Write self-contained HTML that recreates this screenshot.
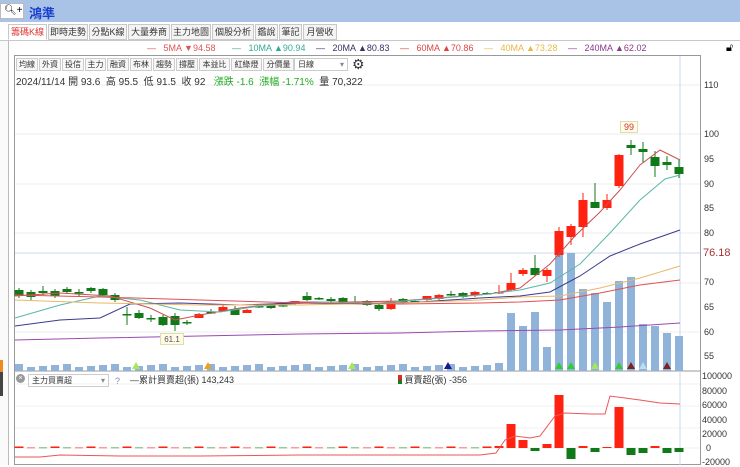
<!DOCTYPE html>
<html><head><meta charset="utf-8"><style>
*{margin:0;padding:0;box-sizing:border-box}
body{width:740px;height:465px;overflow:hidden;background:#fff;font-family:"Liberation Sans","Noto Sans CJK TC",sans-serif;position:relative}
.a{position:absolute}
.tab{position:absolute;top:24px;height:16px;border:1px solid #c8c8c8;background:#f4f4f4;font-size:9px;line-height:14px;color:#333;text-align:center;white-space:nowrap;overflow:hidden}
.btn{position:absolute;top:58px;height:13px;border:1px solid #ccc;background:#f7f7f7;font-size:8px;line-height:11px;color:#333;text-align:center;white-space:nowrap;overflow:hidden}
.ma{position:absolute;top:43px;font-size:9px;white-space:nowrap}
.yl{position:absolute;left:704px;font-size:9px;color:#333}
.yl2{position:absolute;left:702px;font-size:9px;color:#333}
</style></head><body>
<div class="a" style="left:0;top:0;width:740px;height:22px;background:#a9c3e6"></div>
<div class="a" style="left:0;top:3px;width:24px;height:16px;background:#fff;border:1px solid #bbb;font-size:10px;line-height:14px;padding-left:3px">🔍︎+</div>
<div class="a" style="left:29px;top:3px;font-size:13px;font-weight:bold;color:#1a3fd0">鴻準</div>
<div class="a" style="left:0;top:22px;width:740px;height:443px;background:#fff"></div>
<div class="a" style="left:0;top:40px;width:9px;height:425px;border-right:1px solid #bbb;background:#fafafa"></div>
<div class="a" style="left:0;top:360px;width:3px;height:12px;background:#f08a20"></div>
<div class="a" style="left:0;top:372px;width:3px;height:24px;background:#444"></div>
<div class="tab" style="left:8px;width:39px;background:#fff;color:#d33;border-bottom-color:#fff">籌碼K線</div>
<div class="tab" style="left:48px;width:40px">即時走勢</div>
<div class="tab" style="left:89px;width:38px">分點K線</div>
<div class="tab" style="left:128px;width:42px">大量券商</div>
<div class="tab" style="left:171px;width:40px">主力地圖</div>
<div class="tab" style="left:212px;width:42px">個股分析</div>
<div class="tab" style="left:255px;width:23px">鑑說</div>
<div class="tab" style="left:279px;width:23px">筆記</div>
<div class="tab" style="left:303px;width:34px">月營收</div>
<div class="a" style="left:0;top:40px;width:740px;height:1px;background:#c8c8c8"></div>
<div class="ma" style="left:147px;color:#d55">—&nbsp;&nbsp; 5MA <span>▼</span>94.58</div>
<div class="ma" style="left:232px;color:#3a9">—&nbsp;&nbsp; 10MA ▲90.94</div>
<div class="ma" style="left:316px;color:#336">—&nbsp;&nbsp; 20MA ▲80.83</div>
<div class="ma" style="left:400px;color:#d44">—&nbsp;&nbsp; 60MA ▲70.86</div>
<div class="ma" style="left:484px;color:#e8b84a">—&nbsp;&nbsp; 40MA ▲73.28</div>
<div class="ma" style="left:568px;color:#8a3a8a">—&nbsp;&nbsp; 240MA ▲62.02</div>
<div class="a" style="left:726px;top:42px;font-size:11px">🔓︎</div>
<svg class="a" style="left:0;top:0" width="740" height="465" id="s"></svg>
<div class="btn" style="left:16px;width:22px">均線</div>
<div class="btn" style="left:39px;width:22px">外資</div>
<div class="btn" style="left:62px;width:22px">投信</div>
<div class="btn" style="left:85px;width:21px">主力</div>
<div class="btn" style="left:107px;width:22px">融資</div>
<div class="btn" style="left:130px;width:22px">布林</div>
<div class="btn" style="left:153px;width:22px">趨勢</div>
<div class="btn" style="left:176px;width:22px">撐壓</div>
<div class="btn" style="left:199px;width:31px">本益比</div>
<div class="btn" style="left:231px;width:31px">紅綠燈</div>
<div class="btn" style="left:263px;width:31px">分價量</div>
<div class="btn" style="left:294px;width:54px;background:#fff;text-align:left;padding-left:3px">日線<span style="float:right;color:#888;margin-right:3px">▾</span></div>
<div class="a" style="left:352px;top:56px;font-size:14px;color:#333">⚙</div>
<div class="a" style="left:16px;top:73px;font-size:10px;color:#333;white-space:nowrap">2024/11/14 開 93.6&nbsp; 高 95.5&nbsp; 低 91.5&nbsp; 收 92&nbsp;&nbsp; <span style="color:#2a2">漲跌 -1.6&nbsp; 漲幅 -1.71%</span>&nbsp; 量 70,322</div>
<div class="yl" style="top:80px">110</div><div class="yl" style="top:129px">100</div><div class="yl" style="top:154px">95</div><div class="yl" style="top:179px">90</div><div class="yl" style="top:203px">85</div><div class="yl" style="top:228px">80</div><div class="yl" style="top:277px">70</div><div class="yl" style="top:302px">65</div><div class="yl" style="top:327px">60</div><div class="yl" style="top:351px">55</div>
<div class="a" style="left:703px;top:247px;font-size:11px;color:#a33">76.18</div>
<div class="yl2" style="top:371px">100000</div><div class="yl2" style="top:386px">80000</div><div class="yl2" style="top:400px">60000</div><div class="yl2" style="top:415px">40000</div><div class="yl2" style="top:429px">20000</div><div class="yl2" style="top:443px;left:706px">0</div><div class="yl2" style="top:457px">-20000</div>
<div class="a" style="left:16px;top:374px;width:9px;height:9px;border-radius:50%;background:#999;color:#fff;font-size:7px;line-height:9px;text-align:center">×</div>
<div class="a" style="left:28px;top:374px;width:81px;height:13px;border:1px solid #ccc;font-size:8px;line-height:11px;padding-left:3px;color:#333">主力買賣超<span style="float:right;color:#888;margin-right:3px">▾</span></div>
<div class="a" style="left:115px;top:376px;font-size:9px;color:#88a">?</div>
<div class="a" style="left:130px;top:373px;font-size:9px;color:#333">—累計買賣超(張) 143,243</div>
<div class="a" style="left:398px;top:373px;font-size:9px;color:#333"><span style="display:inline-block;width:4px;height:9px;background:linear-gradient(#e22 50%,#272 50%);vertical-align:-1px"></span> 買賣超(張) -356</div>
<div class="a" style="left:620px;top:121px;width:18px;height:12px;border:1px solid #dda;background:#fffbe8;font-size:9px;color:#c33;text-align:center;line-height:11px">99</div>
<div class="a" style="left:160px;top:333px;width:24px;height:12px;border:1px solid #dda;background:#fffbe8;font-size:8px;color:#555;text-align:center;line-height:11px">61.1</div>
<script>
(function(){
var s=document.getElementById('s'),h='';
function L(x1,y1,x2,y2,c,w){h+='<line x1="'+x1+'" y1="'+y1+'" x2="'+x2+'" y2="'+y2+'" stroke="'+c+'" stroke-width="'+(w||1)+'"/>';}
function R(x,y,w,hh,c){h+='<rect x="'+x+'" y="'+y+'" width="'+w+'" height="'+hh+'" fill="'+c+'"/>';}
function P(pts,c,w){h+='<polyline points="'+pts+'" fill="none" stroke="'+c+'" stroke-width="'+(w||1)+'"/>';}
[85,134,184,233,283,332].forEach(function(y){L(15,y,700,y,'#eee');});
L(15,253,700,253,'#cdd8ee');
[384,406,428,448].forEach(function(y){L(15,y,700,y,'#f0f0f0');});
h+='<rect x="14.5" y="55.5" width="686" height="409" fill="none" stroke="#999"/>';
L(14,371,700,371,'#999');
L(680,56,680,465,'#c8d8f0');
var vx=[],i;for(i=0;i<56;i++)vx.push(19+i*12);
var rv=[363,313,326,312,347,253,253,289,293,302,281,277,324,326,333,336];
for(i=0;i<56;i++){var tv=i>=40?rv[i-40]:364+(i*7%4);R(vx[i]-4,tv,8,371-tv,'#8fb3d9');}
var c=[[290,296,288,298],[292,297,290,300],[291,293,286,295],[291,296,289,298],[289,292,287,294],[292,293,289,296],[288,291,287,293],[289,295,288,296],[295,300,293,302],[314,315,307,325],[313,318,310,319],[318,318,315,322],[317,325,315,326],[316,325,313,331],[322,323,320,325],[318,314,313,318],[312,312,309,314],[311,307,305,311],[309,315,306,315],[313,310,309,313],[306,306,304,308],[305,308,304,309],[305,305,302,307],[304,301,301,305],[296,300,292,301],[298,299,297,300],[299,301,297,303],[298,303,297,304],[302,302,296,304],[301,305,300,306],[305,309,303,311],[309,301,298,310],[299,302,298,304],[301,301,300,302],[300,296,296,301],[299,295,294,300],[294,294,291,296],[293,297,292,298],[295,292,291,297],[293,293,292,294],[293,292,285,294],[290,283,273,291],[274,270,268,276],[268,275,255,276],[276,270,268,282],[255,231,227,257],[237,226,224,245],[227,200,193,237],[202,208,183,208],[208,200,194,210],[186,155,154,188],[145,148,140,155],[149,152,142,163],[157,166,151,177],[162,165,156,170],[167,174,160,178]];
for(i=0;i<56;i++){var d=c[i],x=vx[i],up=d[1]<d[0],col=up?'#f21':'#117a18';if(i>=51)col='#117a18';
L(x,d[2],x,d[3],col);var tp=Math.min(d[0],d[1]),bh=Math.max(1.5,Math.abs(d[1]-d[0]));R(x-4.5,tp,9,bh,col);}
P('15,296 60,293 110,296 150,308 175,320 200,315 240,308 290,302 350,302 400,301 450,297 490,294 520,288 550,264 575,236 600,212 620,190 640,165 660,150 680,160','#c8504f');
P('15,318 60,305 100,296 140,300 180,310 220,312 260,306 320,302 380,303 430,299 480,295 520,290 550,283 580,264 610,233 640,200 665,179 680,175','#5bb5a8');
P('15,326 60,320 100,318 130,304 180,303 240,305 300,303 360,304 420,302 480,298 520,296 550,292 580,276 610,256 640,244 680,230','#3a3a90');
P('15,300 100,303 200,305 300,305 400,303 480,300 520,297 560,296 600,288 640,278 680,266','#eab86a');
P('15,295 100,297 200,300 300,303 400,304 480,303 520,302 560,300 600,293 640,285 680,280','#e05050');
P('15,340 100,338 200,336 300,334 400,333 480,331 560,330 620,327 680,323','#9a4ab0');
[[136,'#a6e85a'],[208,'#f0a020'],[352,'#a6e85a'],[448,'#1a1a90'],[559,'#3c3'],[571,'#3c3'],[595,'#a6e85a'],[619,'#3c3'],[631,'#802020'],[643,'#bde'],[667,'#802020']].forEach(function(t){h+='<polygon points="'+(t[0]-4)+',369 '+(t[0]+4)+',369 '+t[0]+',362" fill="'+t[1]+'"/>';});
var vals={40:-2,41:-24,42:-8,43:3,44:-4,45:-53,46:11,47:-2,48:4,49:-1,50:-41,51:7,52:5,53:-2,54:5,55:4};
for(i=0;i<56;i++){var v,x2=vx[i];
 if(vals[i]!==undefined)v=vals[i];else v=(i%3==0)?-1.5:0;
 if(v<0)R(x2-4.5,448+v,9,-v,'#f21');else if(v>0)R(x2-4.5,448,9,v,'#117a18');else R(x2-4,447,8,1.5,i%2?'#f99':'#9c9');}
P('15,457 40,457 60,455 120,456 200,456 300,455 400,455 480,455 496,453 505,440 515,436 530,438 540,436 555,416 565,413 590,414 605,414 610,396 625,398 640,400 660,403 680,404','#e55');
s.innerHTML=h;
})();
</script>
</body></html>
